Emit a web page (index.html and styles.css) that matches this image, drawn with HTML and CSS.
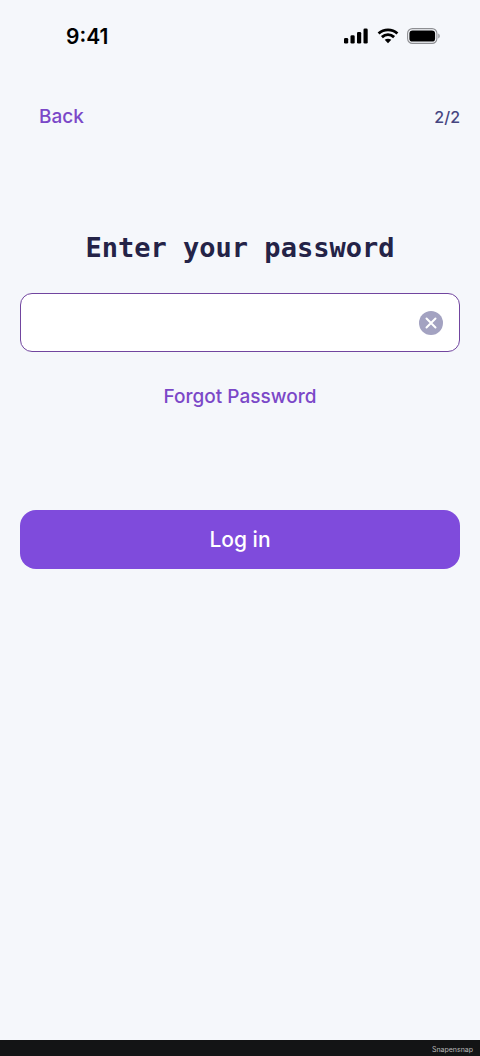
FILE: index.html
```html
<!DOCTYPE html>
<html lang="en">
<head>
<meta charset="utf-8">
<meta name="viewport" content="width=device-width, initial-scale=1">
<title>Enter your password</title>
<link rel="stylesheet" href="styles.css">
</head>
<body>
<div class="status">
  <time class="clock">9:41</time>
  <div class="indicators">
    <svg width="26" height="16" viewBox="0 0 26 16" aria-hidden="true">
      <rect x="1" y="10" width="4.200" height="5.500" rx="1.300"/>
      <rect x="7.500" y="7.300" width="4.200" height="8.200" rx="1.300"/>
      <rect x="14" y="4" width="4.200" height="11.500" rx="1.300"/>
      <rect x="20.500" y="0.500" width="4.200" height="15" rx="1.300"/>
    </svg>
    <svg width="22" height="16" viewBox="0 0 22 16" aria-hidden="true">
      <g fill="none" stroke="#000" stroke-width="2.900">
        <path d="M1.600 5.500C7 .6 15 .6 20.400 5.500"/>
        <path d="M4.900 9.200C8.500 6 13.500 6 17.100 9.200"/>
      </g>
      <path d="M7.700 11.800C9.600 10.300 12.400 10.300 14.300 11.800L11 15.200Z"/>
    </svg>
    <svg width="34" height="16" viewBox="0 0 34 16" aria-hidden="true">
      <rect x=".6" y=".6" width="29.300" height="14.800" rx="4.800" fill="none" stroke="#8e8f93" stroke-width="1.100"/>
      <rect x="2.400" y="2.400" width="25.700" height="11.200" rx="3.200"/>
      <path d="M31.300 5.500C33.200 6.200 33.200 9.800 31.300 10.500Z" fill="#8e8f93"/>
    </svg>
  </div>
</div>
<nav class="topbar">
  <a class="link back" href="#">Back</a>
  <span class="step">2/2</span>
</nav>
<main class="content">
  <form class="form">
    <h1 class="title"><label for="password">Enter your password</label></h1>
    <div class="field">
      <input class="input" id="password" type="password">
      <button class="clear" type="button" aria-label="Clear password">
        <svg width="24" height="24" viewBox="0 0 24 24" aria-hidden="true">
          <circle cx="12" cy="12" r="12" fill="#a3a2c1"/>
          <path d="M7.500 7.500L16.500 16.500M16.500 7.500L7.500 16.500" stroke="#fff" stroke-width="2" stroke-linecap="round"/>
        </svg>
      </button>
    </div>
    <a class="link forgot" href="#">Forgot Password</a>
    <button class="submit" type="submit">Log in</button>
  </form>
</main>
<footer class="footer">Snapensnap</footer>
</body>
</html>
```
FILE: styles.css
```css
* {
  box-sizing: border-box;
}

body {
  margin: 0;
  min-height: 100vh;
  display: flex;
  flex-direction: column;
  background: #f5f7fb;
  font-family: Inter, "Liberation Sans", sans-serif;
  font-weight: 500;
}

.status {
  display: flex;
  align-items: center;
  justify-content: space-between;
  height: 72px;
  padding: 0 39px 0 66px;
}

.clock {
  font-size: 21px;
  font-weight: 600;
}

.indicators {
  display: flex;
  gap: 8px;
}

.topbar {
  display: flex;
  align-items: center;
  justify-content: space-between;
  padding: 33px 20px 0 39px;
  line-height: 24px;
}

.link {
  color: #7b48c8;
  font-size: 19px;
  text-decoration: none;
}

.step {
  color: #464580;
  font-size: 16px;
}

.content {
  flex: 1;
  padding: 103px 20px 0;
}

.form {
  display: flex;
  flex-direction: column;
}

.title {
  margin: 0 0 29px;
  color: #242347;
  font: bold 27px/32px "DejaVu Sans Mono", monospace;
  text-align: center;
}

.field {
  display: flex;
  align-items: center;
  height: 59px;
  padding: 0 16px;
  border: 1px solid #71459f;
  border-radius: 12px;
  background: #fff;
}

.input {
  flex: 1;
  min-width: 0;
  height: 100%;
  border: 0;
  outline: 0;
  background: transparent;
  font: inherit;
  font-size: 19px;
}

.clear {
  display: flex;
  padding: 0;
  border: 0;
  background: none;
}

.forgot {
  align-self: center;
  margin: 33px 0 101px;
  line-height: 24px;
}

.submit {
  height: 59px;
  padding: 0;
  border: 0;
  border-radius: 16px;
  background: #7f4bdc;
  color: #fff;
  font: inherit;
  font-size: 21px;
}

.footer {
  height: 16px;
  padding: 0 7px;
  background: #131415;
  color: #b9b9b9;
  font: 7px/20px Inter, "Liberation Sans", sans-serif;
  text-align: right;
}
```
